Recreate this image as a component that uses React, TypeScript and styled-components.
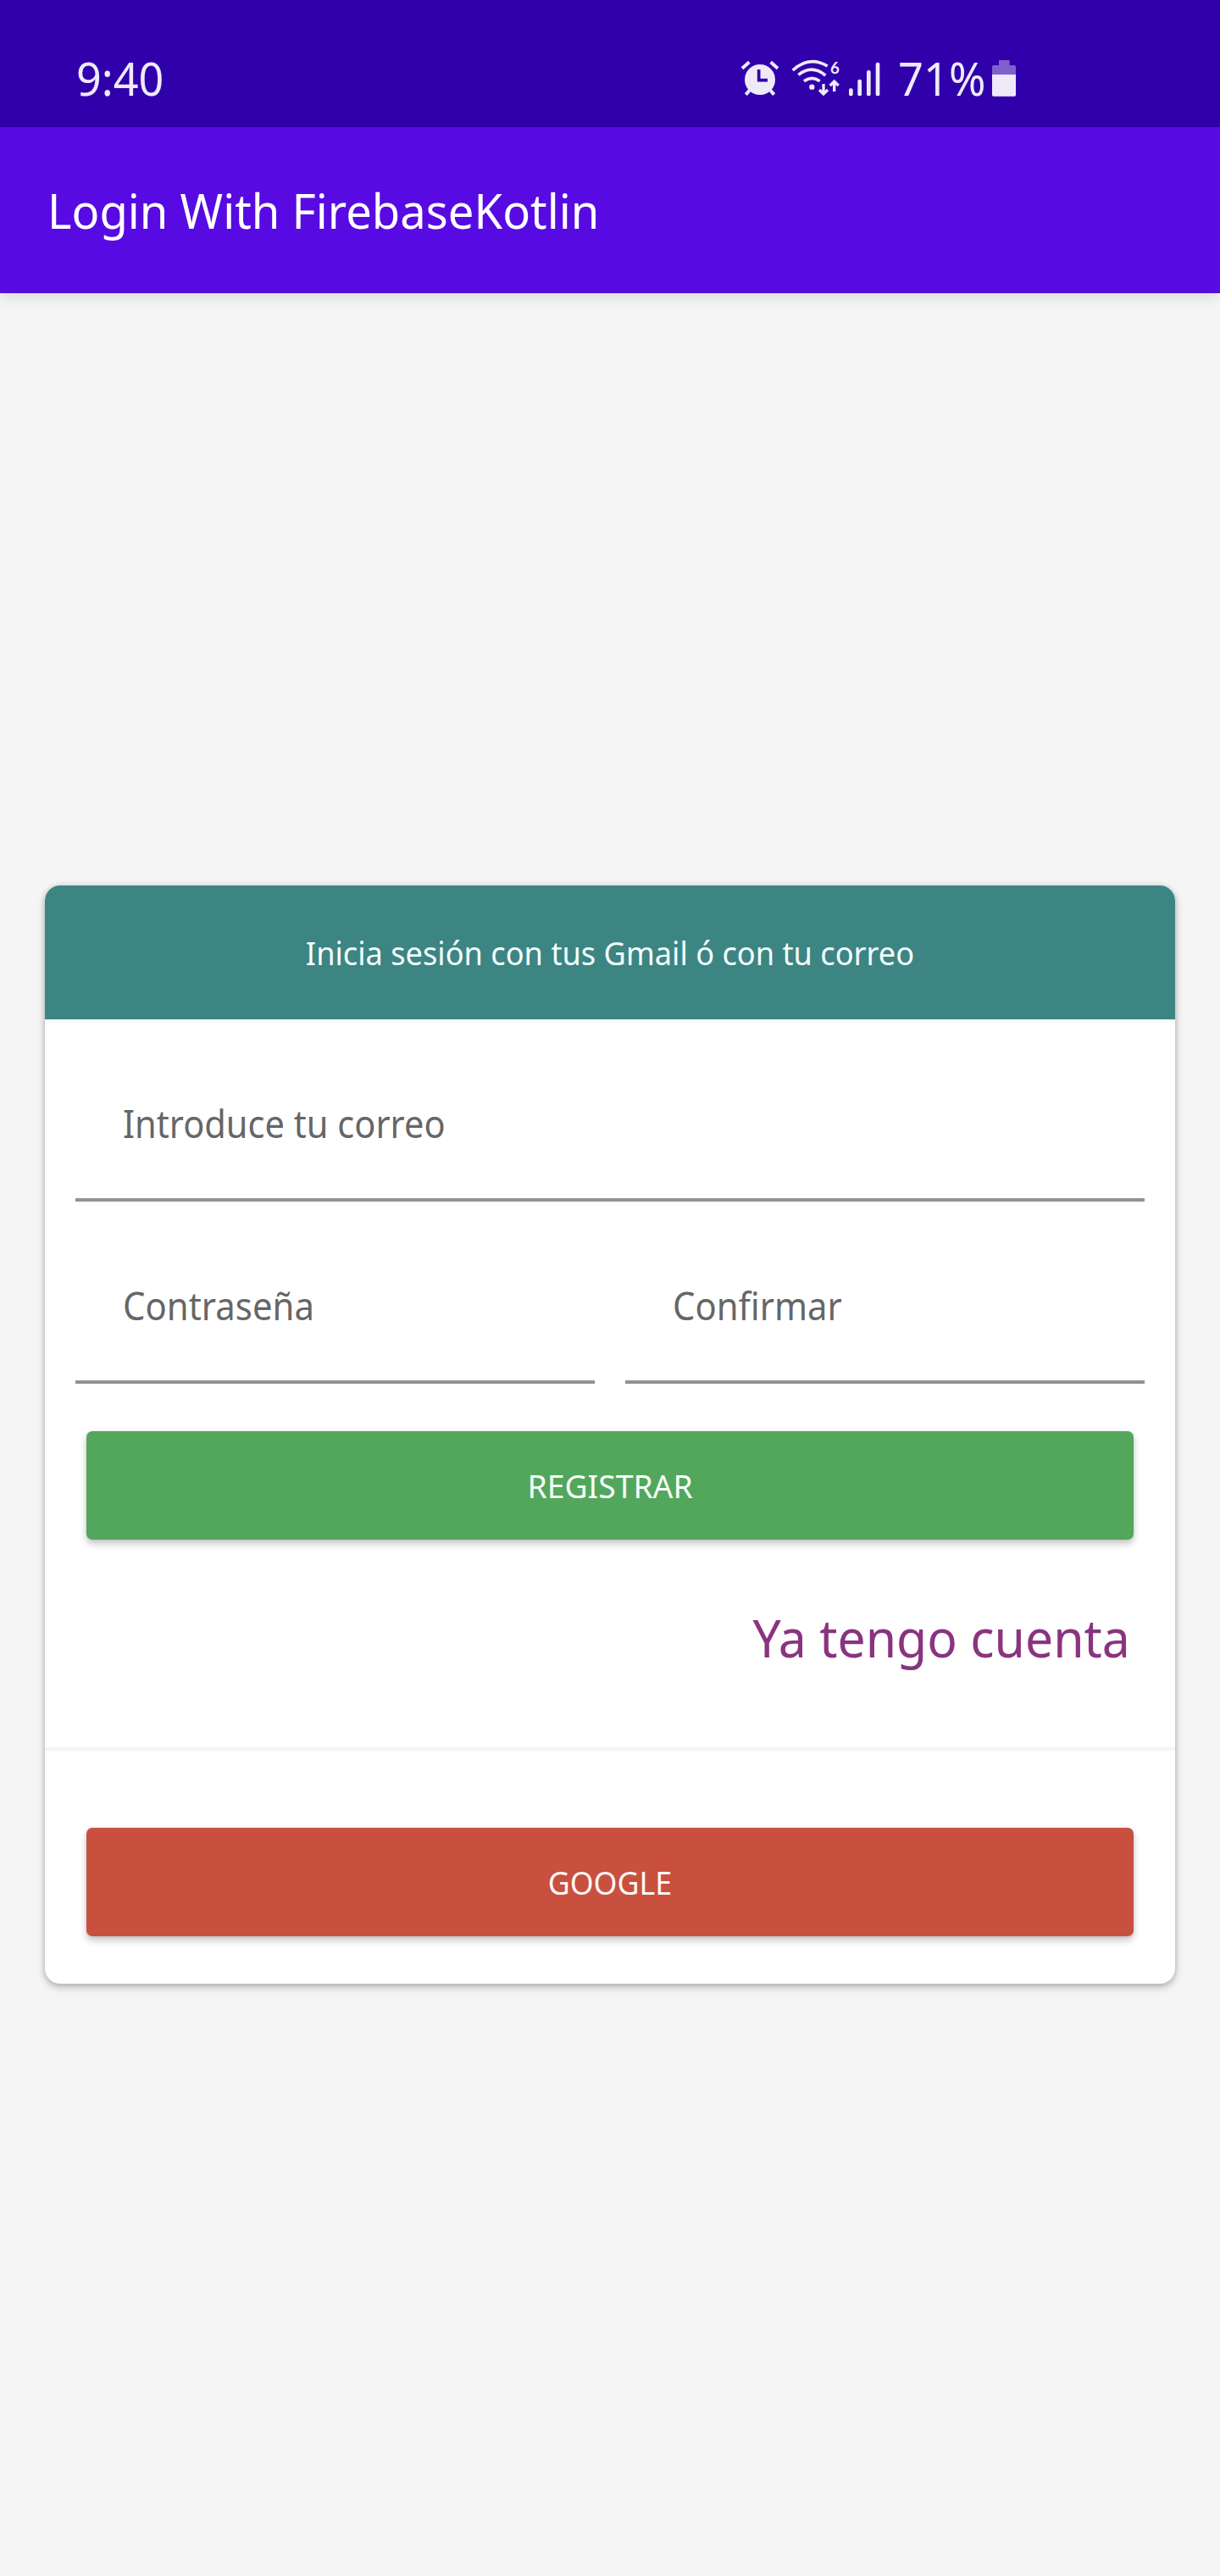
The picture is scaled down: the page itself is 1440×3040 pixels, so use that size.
import React from "react";
import styled, { createGlobalStyle } from "styled-components";

const GlobalStyle = createGlobalStyle`
  * { box-sizing: border-box; }
  body {
    margin: 0;
    background: #f5f5f5;
    font-family: "Noto Sans", "Open Sans", sans-serif;
  }
`;

const Screen = styled.div`
  width: 1440px;
  height: 3040px;
  display: flex;
  flex-direction: column;
  background: #f5f5f5;
  overflow: hidden;
`;

/* Text with slightly condensed glyphs; `origin` is the edge that stays fixed. */
const Text = styled.span<{
  $size: number;
  $color: string;
  $stretch?: number;
  $origin?: "left" | "center" | "right";
}>`
  display: block;
  font-size: ${(p) => p.$size}px;
  line-height: 1.3;
  color: ${(p) => p.$color};
  white-space: nowrap;
  transform: scaleX(${(p) => p.$stretch ?? 1});
  transform-origin: ${(p) => p.$origin ?? "left"} center;
`;

const StatusBar = styled.header`
  flex: none;
  height: 150px;
  padding: 35px 240px 0 90px;
  display: flex;
  align-items: center;
  justify-content: space-between;
  background: #3000ab;
`;

const StatusIcons = styled.div`
  display: flex;
  align-items: center;
  height: 45px;
`;

const Glyph = styled.svg<{ $w: number; $gap?: number }>`
  flex: none;
  display: block;
  overflow: visible;
  width: ${(p) => p.$w}px;
  height: 45px;
  margin-right: ${(p) => p.$gap ?? 0}px;
`;

const BatteryLevel = styled.div`
  width: 110px;
  flex: none;
`;

const AppBar = styled.div`
  flex: none;
  height: 196px;
  padding-left: 56px;
  display: flex;
  align-items: center;
  background: #570be2;
  box-shadow: 0 4px 16px rgba(0, 0, 0, 0.12);
`;

const Content = styled.main`
  flex: 1;
  padding: 699px 53px 0;
`;

const Card = styled.section`
  height: 1296px;
  display: flex;
  flex-direction: column;
  background: #fff;
  border-radius: 18px;
  box-shadow: 0 4px 10px rgba(0, 0, 0, 0.25), 0 0 6px rgba(0, 0, 0, 0.12);
`;

const CardHeader = styled.div`
  flex: none;
  height: 158px;
  display: flex;
  align-items: center;
  justify-content: center;
  background: #3c8583;
  border-radius: 18px 18px 0 0;
`;

const Form = styled.form`
  flex: none;
  height: 859px;
  padding: 29px 36px 0;
  display: flex;
  flex-direction: column;
`;

const FieldRow = styled.div`
  display: flex;
  gap: 36px;
  margin-bottom: 29px;
`;

const Field = styled.label`
  flex: 1;
  height: 186px;
  padding: 6px 56px 0;
  display: flex;
  align-items: center;
  border-bottom: 4px solid #929292;
`;

const ActionButton = styled.button<{ $bg: string }>`
  flex: none;
  height: 128px;
  margin: 27px 13px 0;
  padding: 0;
  border: 0;
  display: flex;
  align-items: center;
  justify-content: center;
  font-family: inherit;
  background: ${(p) => p.$bg};
  border-radius: 7px;
  box-shadow: 0 5px 9px rgba(0, 0, 0, 0.22), 0 0 4px rgba(0, 0, 0, 0.08);
`;

const AccountLink = styled.a`
  align-self: flex-end;
  margin: 75px 17px 0 0;
`;

const Divider = styled.div`
  flex: none;
  height: 4px;
  background: #f5f5f5;
`;

const Social = styled.div`
  flex: none;
  padding: 64px 36px 0;
  display: flex;
  flex-direction: column;
`;

const ICON = "#efeafa";

const AlarmIcon = () => (
  <Glyph $w={46} $gap={14} viewBox="42 60 138 135" fill="none" stroke={ICON}>
    <circle cx="111" cy="132" r="54" fill={ICON} stroke="none" />
    <path d="M48 92 L73 70 M149 70 L174 92" strokeWidth="12" />
    <path d="M74 170 L61 185 M148 170 L161 185" strokeWidth="12" />
    <path d="M107 96 V134 H138" stroke="#3000ab" strokeWidth="11" />
  </Glyph>
);

const WifiIcon = () => (
  <Glyph $w={58} $gap={9} viewBox="224 60 174 135" fill="none" stroke={ICON}>
    <path d="M229 99 Q287 46 352 84" strokeWidth="11" />
    <path d="M249 115 Q297 77 345 117" strokeWidth="11" />
    <path d="M269 137 Q297 117 325 137" strokeWidth="11" />
    <circle cx="297" cy="158" r="9.5" fill={ICON} stroke="none" />
    <path d="M338 147 V183 M323 168 L338 183 L353 168" strokeWidth="10" />
    <path d="M376 174 V138 M361 153 L376 138 L391 153" strokeWidth="10" />
    <text
      x="362"
      y="112"
      fontFamily="Lato, Noto Sans, sans-serif"
      fontSize="56"
      fontWeight="700"
      fill={ICON}
      stroke="none"
    >
      6
    </text>
  </Glyph>
);

const SignalIcon = () => (
  <Glyph $w={38} $gap={21} viewBox="426 60 114 135" fill={ICON}>
    <rect x="429" y="163" width="14" height="27" rx="6" />
    <rect x="460" y="131" width="14" height="59" rx="6" />
    <rect x="492" y="99" width="14" height="91" rx="6" />
    <rect x="524" y="71" width="14" height="119" rx="6" />
  </Glyph>
);

const BatteryIcon = () => (
  <Glyph $w={30} viewBox="930 60 90 135">
    <path
      d="M957 66 q0 -3 3 -3 h32 q3 0 3 3 v15 h17 q5 0 5 5 v28 h-84 v-28 q0 -5 5 -5 h19 z"
      fill="#8061cb"
    />
    <path d="M933 114 h84 v72 q0 5 -5 5 h-74 q-5 0 -5 -5 z" fill={ICON} />
  </Glyph>
);

const HINT = "#666666";

export default function App() {
  return (
    <>
      <GlobalStyle />
      <Screen>
        <StatusBar>
          <Text $size={54} $color={ICON} $stretch={0.965}>9:40</Text>
          <StatusIcons>
            <AlarmIcon />
            <WifiIcon />
            <SignalIcon />
            <BatteryLevel>
              <Text $size={54} $color={ICON} $stretch={0.97}>71%</Text>
            </BatteryLevel>
            <BatteryIcon />
          </StatusIcons>
        </StatusBar>
        <AppBar>
          <Text $size={56} $color="#ffffff" $stretch={0.971}>Login With FirebaseKotlin</Text>
        </AppBar>
        <Content>
          <Card>
            <CardHeader>
              <Text $size={39} $color="#f4fffe" $stretch={0.928} $origin="center">
                Inicia sesión con tus Gmail ó con tu correo
              </Text>
            </CardHeader>
            <Form>
              <FieldRow>
                <Field>
                  <Text $size={45} $color={HINT} $stretch={0.924}>Introduce tu correo</Text>
                </Field>
              </FieldRow>
              <FieldRow>
                <Field>
                  <Text $size={45} $color={HINT} $stretch={0.931}>Contraseña</Text>
                </Field>
                <Field>
                  <Text $size={45} $color={HINT} $stretch={0.929}>Confirmar</Text>
                </Field>
              </FieldRow>
              <ActionButton type="button" $bg="#52a75d">
                <Text $size={39} $color="#f8fff9" $stretch={0.956} $origin="center">REGISTRAR</Text>
              </ActionButton>
              <AccountLink>
                <Text $size={62} $color="#89347f" $stretch={0.95} $origin="right">Ya tengo cuenta</Text>
              </AccountLink>
            </Form>
            <Divider />
            <Social>
              <ActionButton type="button" $bg="#c9503f">
                <Text $size={39} $color="#fff8f6" $stretch={0.916} $origin="center">GOOGLE</Text>
              </ActionButton>
            </Social>
          </Card>
        </Content>
      </Screen>
    </>
  );
}
